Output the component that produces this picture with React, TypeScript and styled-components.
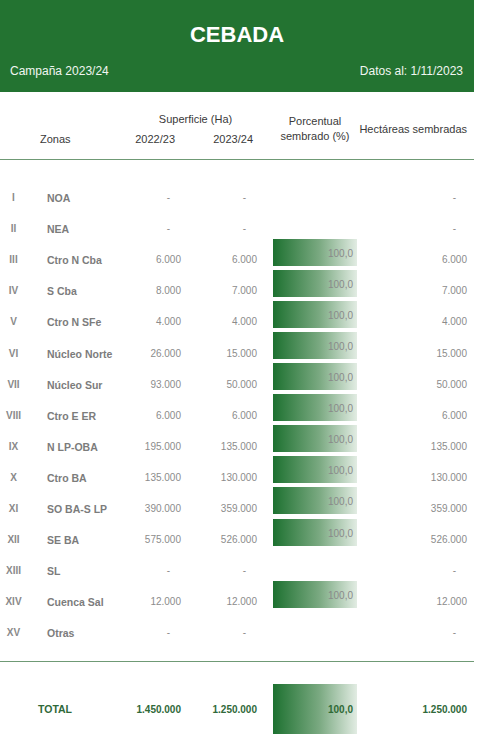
import styled, { createGlobalStyle } from "styled-components";

type Zone = {
  num: string;
  name: string;
  prev: string;
  curr: string;
  pct?: string;
  sown: string;
};

const ZONES: Zone[] = [
  { num: "I", name: "NOA", prev: "-", curr: "-", sown: "-" },
  { num: "II", name: "NEA", prev: "-", curr: "-", sown: "-" },
  { num: "III", name: "Ctro N Cba", prev: "6.000", curr: "6.000", pct: "100,0", sown: "6.000" },
  { num: "IV", name: "S Cba", prev: "8.000", curr: "7.000", pct: "100,0", sown: "7.000" },
  { num: "V", name: "Ctro N SFe", prev: "4.000", curr: "4.000", pct: "100,0", sown: "4.000" },
  { num: "VI", name: "Núcleo Norte", prev: "26.000", curr: "15.000", pct: "100,0", sown: "15.000" },
  { num: "VII", name: "Núcleo Sur", prev: "93.000", curr: "50.000", pct: "100,0", sown: "50.000" },
  { num: "VIII", name: "Ctro E ER", prev: "6.000", curr: "6.000", pct: "100,0", sown: "6.000" },
  { num: "IX", name: "N LP-OBA", prev: "195.000", curr: "135.000", pct: "100,0", sown: "135.000" },
  { num: "X", name: "Ctro BA", prev: "135.000", curr: "130.000", pct: "100,0", sown: "130.000" },
  { num: "XI", name: "SO BA-S LP", prev: "390.000", curr: "359.000", pct: "100,0", sown: "359.000" },
  { num: "XII", name: "SE BA", prev: "575.000", curr: "526.000", pct: "100,0", sown: "526.000" },
  { num: "XIII", name: "SL", prev: "-", curr: "-", sown: "-" },
  { num: "XIV", name: "Cuenca Sal", prev: "12.000", curr: "12.000", pct: "100,0", sown: "12.000" },
  { num: "XV", name: "Otras", prev: "-", curr: "-", sown: "-" },
];

const GlobalStyle = createGlobalStyle`
  body {
    margin: 0;
    background: #fff;
    font-family: "Liberation Sans", Arial, sans-serif;
  }
`;

const COLUMNS = "27px 93px 61px 76px 100px 110px";

const Sheet = styled.div`
  width: 474px;
`;

const Banner = styled.header`
  background: #237331;
  height: 92px;
  color: #fff;
  display: flex;
  flex-direction: column;
`;

const Title = styled.h1`
  margin: 22px 0 0;
  font-size: 22px;
  line-height: 26px;
  font-weight: 700;
  text-align: center;
`;

const SubRow = styled.div`
  display: flex;
  justify-content: space-between;
  margin-top: 16px;
  padding: 0 11px 0 10px;
  font-size: 12px;
  line-height: 14px;
  color: #f1f6f1;
`;

const ColHead = styled.div`
  display: grid;
  grid-template-columns: ${COLUMNS};
  grid-template-rows: 20px 20px;
  padding: 17px 7px 10px 0;
  border-bottom: 1px solid #6f9a75;
  font-size: 11px;
  color: #3a3a3a;
`;

const HeadCell = styled.div<{ $col: string; $row: string; $align?: string; $pad?: string }>`
  grid-column: ${(p) => p.$col};
  grid-row: ${(p) => p.$row};
  text-align: ${(p) => p.$align || "left"};
  padding: ${(p) => p.$pad || "0"};
  align-self: center;
  line-height: 15px;
`;

const Body = styled.div`
  padding: 15px 7px 20px 0;
  border-bottom: 1px solid #6f9a75;
`;

const Row = styled.div`
  display: grid;
  grid-template-columns: ${COLUMNS};
  height: 31.1px;
  align-items: end;
  font-size: 10px;
  line-height: 12px;
`;

const Numeral = styled.div`
  text-align: center;
  font-weight: 700;
  color: #8a8a8a;
  padding-bottom: 2px;
`;

const ZoneName = styled.div`
  padding: 0 0 2px 20px;
  font-size: 10.5px;
  font-weight: 700;
  color: #7c7c7c;
  white-space: nowrap;
`;

const Num = styled.div<{ $dash?: boolean }>`
  text-align: right;
  color: #8c8c8c;
  padding-bottom: 2px;
  padding-right: ${(p) => (p.$dash ? "11px" : "0")};
`;

const Bar = styled.div<{ $total?: boolean }>`
  margin-left: 16px;
  width: 84px;
  height: ${(p) => (p.$total ? "50px" : "27px")};
  align-self: ${(p) => (p.$total ? "center" : "start")};
  margin-top: ${(p) => (p.$total ? "0" : "1.5px")};
  background: linear-gradient(to right, #1d7130 0%, #7aa981 55%, #e2ece3 100%);
  display: flex;
  align-items: center;
  justify-content: flex-end;
  padding: ${(p) => (p.$total ? "0 4px 0 0" : "3px 4px 0 0")};
  box-sizing: border-box;
  font-size: 10px;
  font-weight: ${(p) => (p.$total ? 700 : 400)};
  color: ${(p) => (p.$total ? "#2f6a36" : "#8a8a8a")};
`;

const TotalRow = styled.div`
  display: grid;
  grid-template-columns: ${COLUMNS};
  align-items: center;
  padding: 22px 7px 0 0;
  font-size: 10px;
  font-weight: 700;
  color: #30693a;
`;

const TotalLabel = styled.div`
  grid-column: 1 / 3;
  padding-left: 38px;
  font-size: 10.5px;
`;

const TotalNum = styled.div`
  text-align: right;
`;

const App = () => {
  return (
    <Sheet>
      <GlobalStyle />
      <Banner>
        <Title>CEBADA</Title>
        <SubRow>
          <span>Campaña 2023/24</span>
          <span>Datos al: 1/11/2023</span>
        </SubRow>
      </Banner>

      <ColHead>
        <HeadCell $col="3 / 5" $row="1" $align="center" $pad="0 0 0 14px">
          Superficie (Ha)
        </HeadCell>
        <HeadCell $col="2" $row="2" $pad="0 0 0 13px">
          Zonas
        </HeadCell>
        <HeadCell $col="3" $row="2" $align="right" $pad="0 6px 0 0">
          2022/23
        </HeadCell>
        <HeadCell $col="4" $row="2" $align="right" $pad="0 4px 0 0">
          2023/24
        </HeadCell>
        <HeadCell $col="5" $row="1 / 3" $align="center" $pad="0 0 0 16px">
          Porcentual
          <br />
          sembrado (%)
        </HeadCell>
        <HeadCell $col="6" $row="1 / 3" $align="right">
          Hectáreas sembradas
        </HeadCell>
      </ColHead>

      <Body>
        {ZONES.map((z) => (
          <Row key={z.num}>
            <Numeral>{z.num}</Numeral>
            <ZoneName>{z.name}</ZoneName>
            <Num $dash={z.prev === "-"}>{z.prev}</Num>
            <Num $dash={z.curr === "-"}>{z.curr}</Num>
            {z.pct ? <Bar>{z.pct}</Bar> : <div />}
            <Num $dash={z.sown === "-"}>{z.sown}</Num>
          </Row>
        ))}
      </Body>

      <TotalRow>
        <TotalLabel>TOTAL</TotalLabel>
        <TotalNum>1.450.000</TotalNum>
        <TotalNum>1.250.000</TotalNum>
        <Bar $total>100,0</Bar>
        <TotalNum>1.250.000</TotalNum>
      </TotalRow>
    </Sheet>
  );
};

export default App;
